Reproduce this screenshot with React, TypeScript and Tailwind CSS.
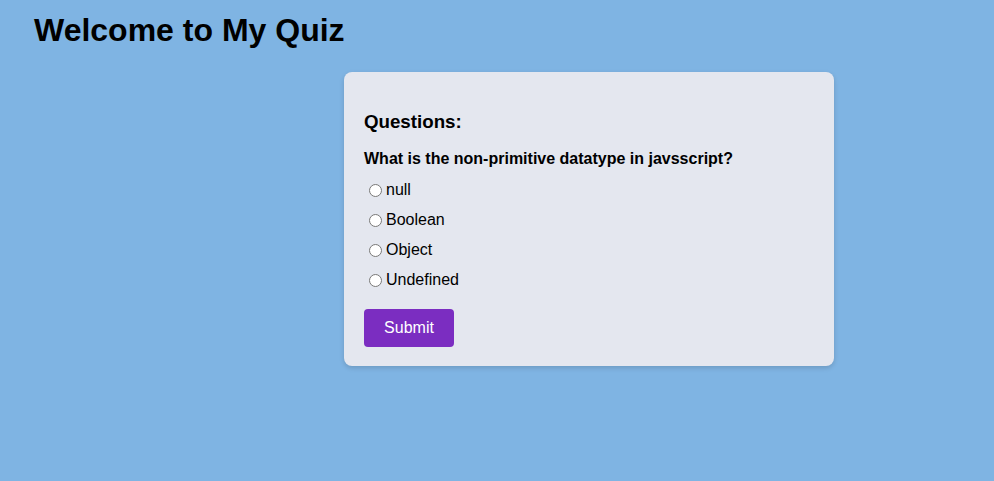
const options = ["null", "Boolean", "Object", "Undefined"];

export default function App() {
  return (
    <div className="min-h-[481px] w-full bg-[#7fb4e3] font-['Liberation_Sans',Arial,sans-serif] text-black">
      <h1 className="pl-[34px] pt-[12px] text-[32px] font-bold leading-[37px]">
        Welcome to My Quiz
      </h1>

      <div className="ml-[344px] mt-[23px] w-[490px] rounded-lg bg-[#e4e7ef] px-5 pb-[19px] pt-[38px] shadow-[0_2px_5px_rgba(0,0,0,0.15)]">
        <h3 className="text-[18.72px] font-bold leading-[23px]">Questions:</h3>
        <p className="mt-[17px] text-[16px] font-bold leading-[18px]">
          What is the non-primitive datatype in javsscript?
        </p>

        <div className="mt-[7px] flex flex-col">
          {options.map((opt) => (
            <label key={opt} className="flex h-[30px] items-center text-[16px]">
              <input
                type="radio"
                name="answer"
                value={opt}
                className="ml-[5px] mr-[4px] h-[13px] w-[13px]"
              />
              {opt}
            </label>
          ))}
        </div>

        <button className="mt-[14px] h-[38px] w-[90px] rounded bg-[#7b2dc1] text-[16px] text-white">
          Submit
        </button>
      </div>
    </div>
  );
}
